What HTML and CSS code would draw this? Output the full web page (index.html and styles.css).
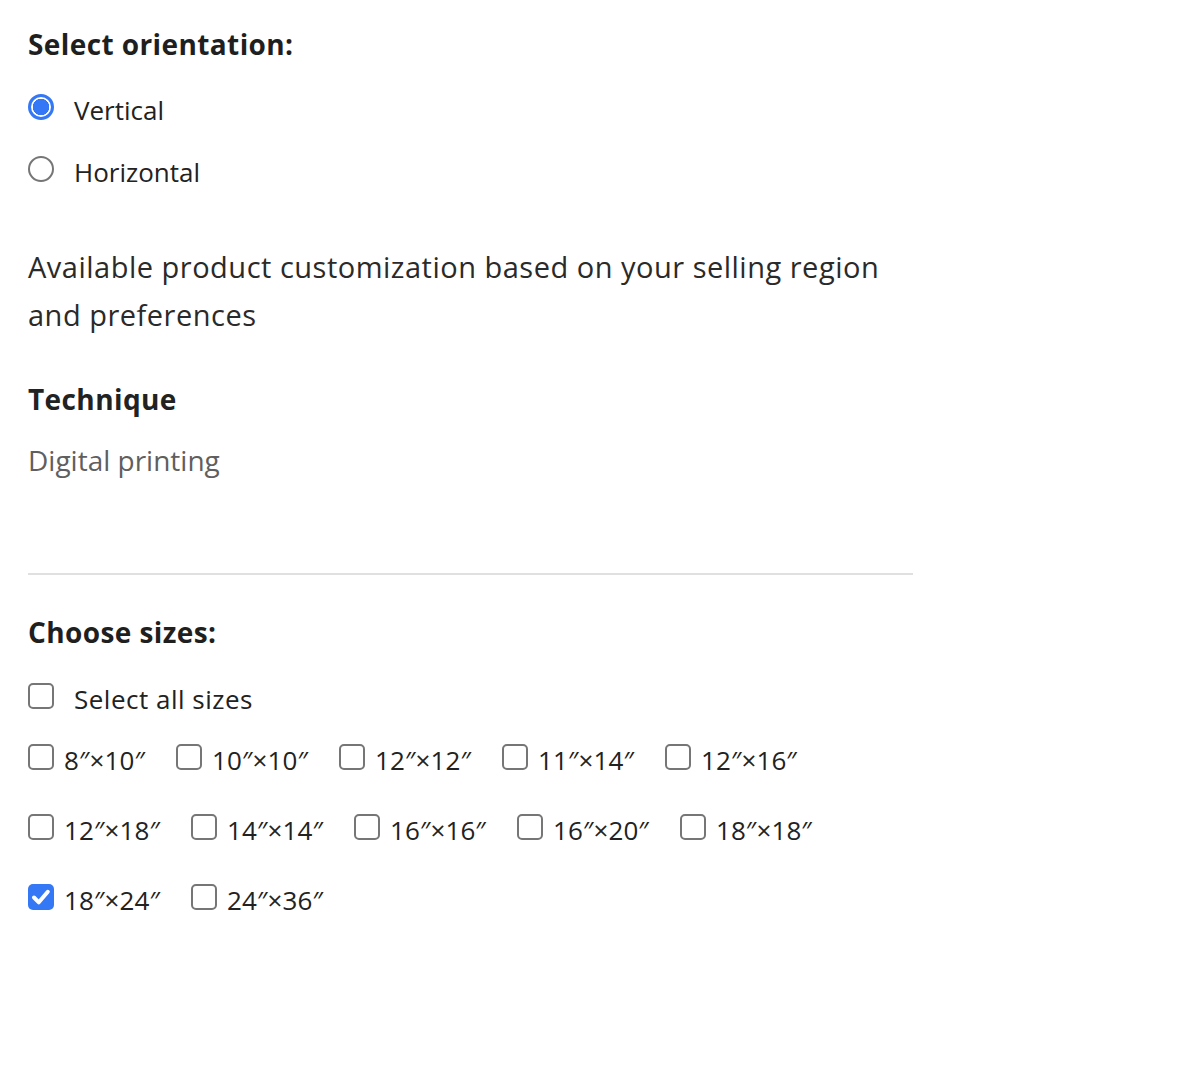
FILE: index.html
```html
<!DOCTYPE html>
<html lang="en">

<head>
    <meta charset="UTF-8">
    <meta name="viewport" content="width=device-width, initial-scale=1.0">
    <title>Product options</title>
    <link rel="stylesheet" href="styles.css">
</head>

<body>
    <div class="options">
        <h2 class="title">Select orientation:</h2>
        <div class="radios">
            <label class="radio"><input type="radio" name="orient" checked><span>Vertical</span></label>
            <label class="radio"><input type="radio" name="orient"><span>Horizontal</span></label>
        </div>

        <p class="intro">Available product customization based on your selling region and preferences</p>

        <h3 class="subtitle">Technique</h3>
        <p class="muted">Digital printing</p>

        <hr class="divider">

        <h2 class="title">Choose sizes:</h2>
        <label class="radio all"><input type="checkbox" class="box"><span>Select all sizes</span></label>

        <div class="sizes">
            <label class="size"><input type="checkbox" class="box"><span>8″×10″</span></label>
            <label class="size"><input type="checkbox" class="box"><span>10″×10″</span></label>
            <label class="size"><input type="checkbox" class="box"><span>12″×12″</span></label>
            <label class="size"><input type="checkbox" class="box"><span>11″×14″</span></label>
            <label class="size"><input type="checkbox" class="box"><span>12″×16″</span></label>
        </div>
        <div class="sizes">
            <label class="size"><input type="checkbox" class="box"><span>12″×18″</span></label>
            <label class="size"><input type="checkbox" class="box"><span>14″×14″</span></label>
            <label class="size"><input type="checkbox" class="box"><span>16″×16″</span></label>
            <label class="size"><input type="checkbox" class="box"><span>16″×20″</span></label>
            <label class="size"><input type="checkbox" class="box"><span>18″×18″</span></label>
        </div>
        <div class="sizes">
            <label class="size"><input type="checkbox" class="box" checked><span>18″×24″</span></label>
            <label class="size"><input type="checkbox" class="box"><span>24″×36″</span></label>
        </div>
    </div>
</body>

</html>
```

FILE: styles.css
```css
* {
    margin: 0;
    padding: 0;
    box-sizing: border-box;
}

body {
    font-family: "Open Sans", Lato, sans-serif;
    color: #222;
    background: #fff;
}

.options {
    width: 913px;
    padding: 24px 0 0 28px;
}

.title {
    font-size: 28px;
    font-weight: 700;
    line-height: 40px;
    letter-spacing: 0.4px;
    color: #1f1f1f;
}

.radios {
    display: flex;
    flex-direction: column;
    gap: 22px;
    margin-top: 26px;
}

.radio {
    display: flex;
    align-items: center;
    gap: 20px;
    font-size: 26px;
    line-height: 40px;
    cursor: pointer;
}

.radio input[type="radio"] {
    appearance: none;
    width: 26px;
    height: 26px;
    border: 2px solid #767676;
    border-radius: 50%;
    margin-top: -6px;
}

.radio input[type="radio"]:checked {
    border: 3px solid #3478f6;
    background: radial-gradient(circle, #3478f6 0 8px, #fff 8.5px);
}

.intro {
    font-size: 29px;
    line-height: 48px;
    letter-spacing: 0.5px;
    margin-top: 51px;
    color: #2a2a2a;
}

.subtitle {
    font-size: 28px;
    font-weight: 700;
    line-height: 40px;
    letter-spacing: 0.4px;
    margin-top: 40px;
}

.muted {
    font-size: 28px;
    line-height: 40px;
    color: #5f5f5f;
    margin-top: 21px;
}

.divider {
    border: none;
    border-top: 2px solid #e0e0e0;
    margin: 93px 0 37px;
}

.all {
    margin-top: 27px;
    letter-spacing: 0.5px;
}

.box {
    appearance: none;
    flex: none;
    width: 26px;
    height: 26px;
    border: 2px solid #767676;
    border-radius: 5px;
    margin-top: -6px;
    cursor: pointer;
}

.box:checked {
    border: none;
    background: #3478f6 url("data:image/svg+xml,%3Csvg xmlns='http://www.w3.org/2000/svg' viewBox='0 0 26 26'%3E%3Cpath d='M6 13.5l4.8 4.8 9-10.5' fill='none' stroke='%23fff' stroke-width='4' stroke-linecap='round' stroke-linejoin='round'/%3E%3C/svg%3E") center / 26px no-repeat;
}

.sizes {
    display: flex;
    gap: 31px;
    margin-top: 21px;
}

.sizes + .sizes {
    margin-top: 30px;
}

.size {
    display: flex;
    align-items: center;
    gap: 10px;
    font-size: 26px;
    line-height: 40px;
    letter-spacing: 0.1px;
    cursor: pointer;
}
```
